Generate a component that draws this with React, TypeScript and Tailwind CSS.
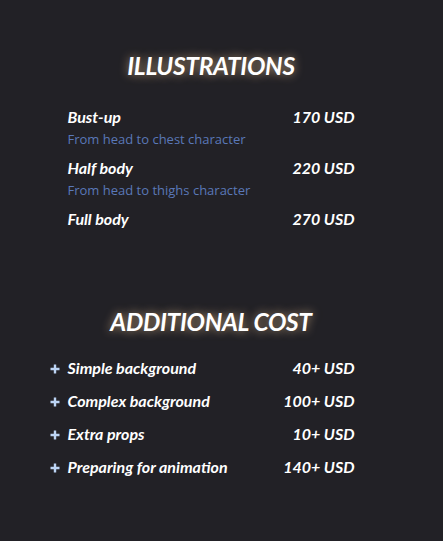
import React from "react";

const items = [
  { name: "Bust-up", price: "170 USD", sub: "From head to chest character" },
  { name: "Half body", price: "220 USD", sub: "From head to thighs character" },
  { name: "Full body", price: "270 USD" },
];

const extras = [
  { name: "Simple background", price: "40+ USD" },
  { name: "Complex background", price: "100+ USD" },
  { name: "Extra props", price: "10+ USD" },
  { name: "Preparing for animation", price: "140+ USD" },
];

export default function App() {
  return (
    <div className="min-h-[541px] w-full bg-[#222126] font-['Lato',sans-serif] text-white">
      <div className="w-[422px] pt-[50px]">
        <h2 className="text-center text-[24.5px] leading-[32px] font-bold italic tracking-[-0.3px] [text-shadow:0_0_10px_rgba(255,214,160,0.65)]">
          ILLUSTRATIONS
        </h2>
        <div className="mx-auto mt-[24px] w-[287px]">
          {items.map((it) => (
            <div key={it.name} className="mb-[7px]">
              <div className="flex justify-between text-[16px] leading-[22px] font-bold italic">
                <span>{it.name}</span>
                <span>{it.price}</span>
              </div>
              {it.sub && (
                <div className="font-['Open_Sans',sans-serif] text-[13px] leading-[22px] text-[#5a78b8]">
                  {it.sub}
                </div>
              )}
            </div>
          ))}
        </div>
        <h2 className="mt-[76px] text-center text-[24.5px] leading-[32px] font-bold italic tracking-[-0.3px] [text-shadow:0_0_10px_rgba(255,214,160,0.65)]">
          ADDITIONAL COST
        </h2>
        <div className="mx-auto mt-[19px] flex w-[287px] flex-col gap-[11px]">
          {extras.map((it) => (
            <div key={it.name} className="flex justify-between text-[16px] leading-[22px] font-bold italic">
              <span className="flex items-center">
                <span className="-ml-[18px] flex w-[18px] items-center">
                  <svg width="10" height="10" viewBox="0 0 10 10" className="mt-[1px]">
                    <path d="M5 0.5V9.5M0.5 5H9.5" stroke="#bcd4f4" strokeWidth="2.4" />
                  </svg>
                </span>
                <span>{it.name}</span>
              </span>
              <span>{it.price}</span>
            </div>
          ))}
        </div>
      </div>
    </div>
  );
}
